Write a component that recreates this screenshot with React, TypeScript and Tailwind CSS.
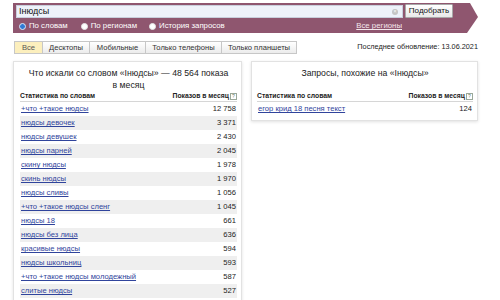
import React from "react";

const rows: [string, string][] = [
  ["+что +такое нюдсы", "12 758"],
  ["нюдсы девочек", "3 371"],
  ["нюдсы девушек", "2 430"],
  ["нюдсы парней", "2 045"],
  ["скину нюдсы", "1 978"],
  ["скинь нюдсы", "1 970"],
  ["нюдсы сливы", "1 056"],
  ["+что +такое нюдсы сленг", "1 045"],
  ["нюдсы 18", "661"],
  ["нюдсы без лица", "636"],
  ["красивые нюдсы", "594"],
  ["нюдсы школьниц", "593"],
  ["+что +такое нюдсы молодежный", "587"],
  ["слитые нюдсы", "527"],
];

function Help() {
  return (
    <span className="ml-[1px] inline-flex h-[7px] w-[7px] items-center justify-center border border-[#9aa89a] text-[5px] font-normal leading-none text-[#6a7a6a]">
      ?
    </span>
  );
}

function HeaderRow() {
  return (
    <div className="flex h-[10px] items-center justify-between border-b border-[#d6d6d6] text-[6.8px] font-bold text-[#222]">
      <span>Статистика по словам</span>
      <span className="flex items-center">
        Показов в месяц
        <Help />
      </span>
    </div>
  );
}

function Row({ text, num, gray }: { text: string; num: string; gray?: boolean }) {
  return (
    <div
      className={`flex h-[14px] items-center justify-between pl-[1px] pr-[1px] text-[7.6px] ${
        gray ? "bg-[#efefef]" : ""
      }`}
    >
      <span className="text-[#30449c] underline decoration-[0.5px] underline-offset-[1px]">{text}</span>
      <span className="text-[#222]">{num}</span>
    </div>
  );
}

function Radio({ on, label }: { on?: boolean; label: string }) {
  return (
    <span className="flex items-center gap-[3px]">
      <span
        className={`h-[7px] w-[7px] rounded-full border ${
          on ? "border-[#dfe9f7] bg-[#2e7ad6]" : "border-[#e6e6e6] bg-white"
        }`}
      />
      <span>{label}</span>
    </span>
  );
}

const tabs = ["Все", "Десктопы", "Мобильные", "Только телефоны", "Только планшеты"];
const tabW = ["w-[27px]", "w-[47px]", "w-[56px]", "w-[76px]", "w-[75px]"];

export default function App() {
  return (
    <div
      className="h-[300px] w-[500px] overflow-hidden bg-white text-[#222]"
      style={{ fontFamily: '"Liberation Sans", Arial, sans-serif' }}
    >
      {/* Header bar */}
      <div className="ml-[13px] mt-[3px] flex">
        <div className="h-[30px] w-[454px] bg-[#8f566f] pl-[3px]">
          <div className="flex items-start">
            <div className="mt-[2px] flex h-[13px] w-[387px] items-center justify-between border border-[#c9cfdc] bg-[#eef2fa] pl-[2px] pr-[4px] text-[9px] text-[#111]">
              <span>Інюдсы</span>
              <span className="flex h-[6px] w-[6px] items-center justify-center rounded-full bg-[#c4c4c4] text-[5px] leading-none text-white">
                ×
              </span>
            </div>
            <div className="ml-[2px] mt-[1px] flex h-[14px] w-[48px] items-center justify-center rounded-[1px] border border-[#a9a9a9] bg-gradient-to-b from-white to-[#e9e9e9] text-[8px] text-[#111]">
              Подобрать
            </div>
          </div>
          <div className="mt-[3px] flex h-[10px] items-center text-[7.8px] text-white">
            <span className="ml-[3px]">
              <Radio on label="По словам" />
            </span>
            <span className="ml-[13px]">
              <Radio label="По регионам" />
            </span>
            <span className="ml-[12px]">
              <Radio label="История запросов" />
            </span>
            <span className="ml-auto mr-[65px] text-[#f3e6ec] underline decoration-[0.5px] underline-offset-[1px]">
              Все регионы
            </span>
          </div>
        </div>
        <svg width="11" height="30" viewBox="0 0 11 30" className="block">
          <polygon points="0,0 3,0 11,14 0,30" fill="#8f566f" />
        </svg>
      </div>

      {/* Tabs row */}
      <div className="ml-[14px] mr-[22px] mt-[8px] flex h-[13px] items-center justify-between">
        <div className="flex h-[13px] border border-[#c7c7c7] text-[7.6px]">
          {tabs.map((t, i) => (
            <div
              key={t}
              className={`flex ${tabW[i]} items-center justify-center ${
                i > 0 ? "border-l border-[#c7c7c7]" : ""
              } ${i === 0 ? "bg-[#fcefbd] text-[#555]" : "bg-gradient-to-b from-white to-[#ececec] text-[#333]"}`}
            >
              {t}
            </div>
          ))}
        </div>
        <span className="text-[7.3px] text-[#222]">Последнее обновление: 13.06.2021</span>
      </div>

      {/* Panels */}
      <div className="ml-[13px] mt-[7px] flex items-start gap-[9px]">
        <div className="w-[229px] border border-[#e2e2e2] pb-[4px] pl-[6px] pr-[4px] shadow-[0_1px_3px_rgba(0,0,0,0.12)]">
          <div className="h-[30px] pt-[5px] text-center text-[8.7px] leading-[12px] text-[#222]">
            Что искали со словом «Інюдсы» — 48 564 показа
            <br />в месяц
          </div>
          <HeaderRow />
          {rows.map(([t, n], i) => (
            <Row key={t} text={t} num={n} gray={i % 2 === 1} />
          ))}
        </div>
        <div className="w-[227px] border border-[#e2e2e2] pb-[4px] pl-[5px] pr-[4px] shadow-[0_1px_3px_rgba(0,0,0,0.12)]">
          <div className="h-[30px] pt-[5px] text-center text-[8.7px] leading-[12px] text-[#222]">
            Запросы, похожие на «Інюдсы»
          </div>
          <HeaderRow />
          <Row text="егор крид 18 песня текст" num="124" />
        </div>
      </div>
    </div>
  );
}
